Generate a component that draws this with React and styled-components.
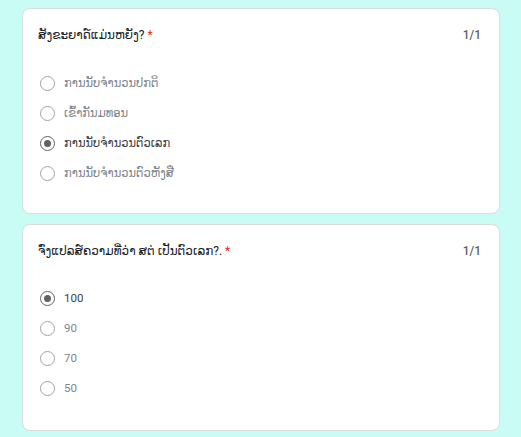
import styled, { createGlobalStyle } from 'styled-components';

const Global = createGlobalStyle`
  html, body {
    margin: 0;
    padding: 0;
    background: #c8fcf4;
  }
  body {
    font-family: Roboto, "DejaVu Sans", "Noto Sans", sans-serif;
  }
`;

const Page = styled.div`
  width: 478px;
  margin: 0 auto;
  padding: 8px 0 0 1px;
  display: flex;
  flex-direction: column;
  gap: 10px;
`;

const Card = styled.div`
  background: #fff;
  border: 1px solid #dadce0;
  border-radius: 8px;
  padding: 17px 18px 30px 15px;
  height: ${(p) => p.h}px;
  box-sizing: border-box;
`;

const Header = styled.div`
  display: flex;
  justify-content: space-between;
  align-items: center;
  height: 18px;
`;

const Title = styled.div`
  font-size: 12px;
  color: #202124;
`;

const Star = styled.span`
  color: #d93025;
  margin-left: 3px;
`;

const Score = styled.div`
  font-size: 12px;
  font-weight: 500;
  color: #5f6368;
`;

const Options = styled.div`
  display: flex;
  flex-direction: column;
  margin-top: ${(p) => p.top}px;
`;

const Option = styled.label`
  display: flex;
  align-items: center;
  height: 30px;
  gap: 9px;
  padding-left: 2px;
  font-size: 11.5px;
  color: ${(p) => (p.checked ? '#3c4043' : '#80868b')};
`;

const Radio = styled.span`
  width: 15px;
  height: 15px;
  border-radius: 50%;
  box-sizing: border-box;
  border: 1.5px solid ${(p) => (p.checked ? '#5f6368' : '#a0a4a8')};
  display: flex;
  align-items: center;
  justify-content: center;
  flex-shrink: 0;
  &::after {
    content: '';
    display: ${(p) => (p.checked ? 'block' : 'none')};
    width: 7px;
    height: 7px;
    border-radius: 50%;
    background: #5f6368;
  }
`;

const questions = [
  {
    title: 'ສັງຂະຍາດ໌ແມ່ນຫຍັງ?',
    h: 206,
    top: 24,
    options: ['ການນັບຈຳນວນປກຕິ', 'ເຂົ້າກັນມທອນ', 'ການນັບຈຳນວນຕົວເລກ', 'ການນັບຈຳນວນຕົວຫັງສື'],
    checked: 2,
  },
  {
    title: 'ຈົ່ງແປລສ໌ຄວາມທີ່ວ່າ ສຕ່ ເປັນຕົວເລກ?.',
    h: 207,
    top: 23,
    options: ['100', '90', '70', '50'],
    checked: 0,
  },
];

export default function App() {
  return (
    <>
      <Global />
      <Page>
        {questions.map((q, i) => (
          <Card key={i} h={q.h}>
            <Header>
              <Title>
                {q.title}
                <Star>*</Star>
              </Title>
              <Score>1/1</Score>
            </Header>
            <Options top={q.top}>
              {q.options.map((o, j) => (
                <Option key={j} checked={j === q.checked}>
                  <Radio checked={j === q.checked} />
                  {o}
                </Option>
              ))}
            </Options>
          </Card>
        ))}
      </Page>
    </>
  );
}
